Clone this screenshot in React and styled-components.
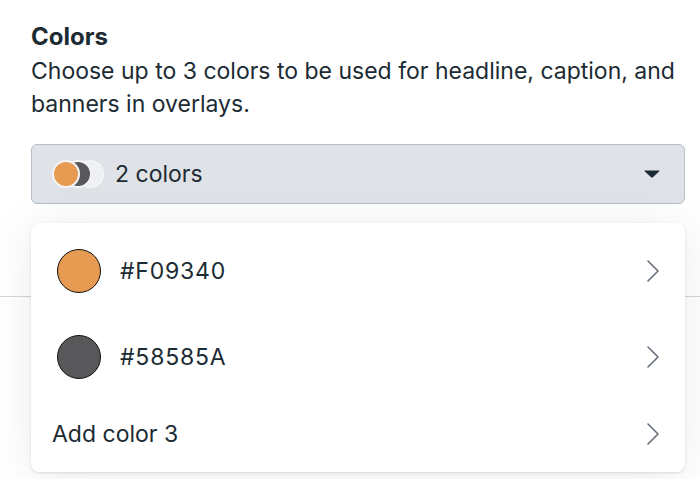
import React from 'react'
import styled, { createGlobalStyle } from 'styled-components'

const GlobalStyle = createGlobalStyle`
  html, body {
    margin: 0;
    padding: 0;
    background: #ffffff;
  }
  body {
    font-family: Inter, "Noto Sans", "Liberation Sans", sans-serif;
    color: #1c2b33;
    overflow: hidden;
  }
`

const colors = [
  { hex: '#F09340', fill: '#e69a52' },
  { hex: '#58585A', fill: '#58585a' },
]

export default function App() {
  return (
    <Page>
      <GlobalStyle />
      <Section>
        <Title>Colors</Title>
        <Description>
          Choose up to 3 colors to be used for headline, caption, and banners in overlays.
        </Description>
        <Field>
          <Select>
            <Stack>
              <MiniDot $fill="#e69a52" $z={3} />
              <MiniDot $fill="#58585a" $z={2} />
              <MiniDot $fill="#eef0f3" $z={1} />
            </Stack>
            <SelectLabel>2 colors</SelectLabel>
            <Caret viewBox="0 0 16 8">
              <path d="M1.2 0.5 H14.8 Q16 0.5 15.1 1.4 L8.9 7.2 Q8 8 7.1 7.2 L0.9 1.4 Q0 0.5 1.2 0.5 Z" fill="#1c2b33" />
            </Caret>
          </Select>
          <Menu>
            {colors.map((c) => (
              <Row key={c.hex}>
                <Swatch $fill={c.fill} />
                <RowLabel $hex>{c.hex}</RowLabel>
                <Chevron />
              </Row>
            ))}
            <Row $plain>
              <RowLabel>Add color 3</RowLabel>
              <Chevron />
            </Row>
          </Menu>
        </Field>
      </Section>
      <Divider />
    </Page>
  )
}

function Chevron() {
  return (
    <ChevronSvg viewBox="0 0 12 22">
      <polyline points="1,1 11,11 1,21" fill="none" stroke="#67707a" strokeWidth="1.6" strokeLinecap="round" strokeLinejoin="round" />
    </ChevronSvg>
  )
}

const Page = styled.div`
  width: 700px;
  height: 479px;
  overflow: hidden;
`

const Section = styled.div`
  padding: 22px 15px 0 31px;
`

const Title = styled.h2`
  margin: 0;
  font-size: 24px;
  font-weight: 700;
  line-height: 30px;
`

const Description = styled.p`
  margin: 3px 0 0;
  font-size: 23px;
  line-height: 33px;
  font-weight: 400;
`

const Field = styled.div`
  position: relative;
  margin-top: 23px;
`

const Select = styled.div`
  display: flex;
  align-items: center;
  height: 58px;
  padding: 0 24px 0 20px;
  background: #dfe2e7;
  border: 1px solid #b6bfca;
  border-radius: 6px;
`

const Stack = styled.div`
  display: flex;
  align-items: center;
`

const MiniDot = styled.span`
  width: 24px;
  height: 24px;
  border-radius: 50%;
  background: ${(p) => p.$fill};
  border: 2px solid #f3f4f6;
  margin-left: -16px;
  position: relative;
  z-index: ${(p) => p.$z};

  &:first-child {
    margin-left: 0;
  }
`

const SelectLabel = styled.span`
  flex: 1;
  margin-left: 11px;
  font-size: 23px;
`

const Caret = styled.svg`
  width: 16px;
  height: 8px;
`

const Menu = styled.div`
  position: absolute;
  top: calc(100% + 19px);
  left: 0;
  right: 0;
  z-index: 5;
  padding: 5px 0 4px;
  background: #ffffff;
  border-radius: 8px;
  box-shadow: 0 1px 3px rgba(0, 0, 0, 0.12), 0 4px 50px rgba(0, 0, 0, 0.08);
`

const Row = styled.div`
  display: flex;
  align-items: center;
  height: ${(p) => (p.$plain ? '68px' : '86px')};
  padding: 0 26px 0 21px;
`

const Swatch = styled.span`
  flex-shrink: 0;
  width: 42px;
  height: 42px;
  margin-left: 5px;
  margin-right: 19px;
  border-radius: 50%;
  background: ${(p) => p.$fill};
  border: 1.5px solid #111111;
`

const RowLabel = styled.span`
  flex: 1;
  font-size: 23px;
  letter-spacing: ${(p) => (p.$hex ? '0.8px' : '0')};
`

const ChevronSvg = styled.svg`
  width: 12px;
  height: 22px;
`

const Divider = styled.div`
  margin-top: 92px;
  height: 1px;
  background: #cfd5dc;
`
